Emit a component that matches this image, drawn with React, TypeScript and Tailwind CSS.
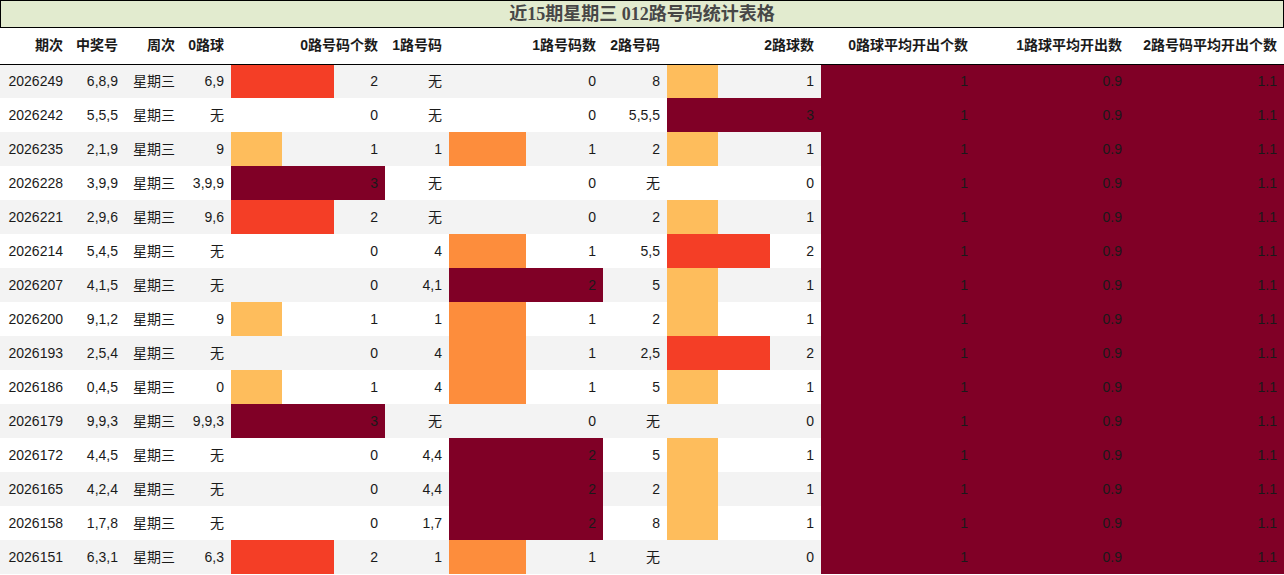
import React from "react";

type Row = [string, string, string, string, number, string, number, string, number];

const rows: Row[] = [
  ["2026249", "6,8,9", "星期三", "6,9", 2, "无", 0, "8", 1],
  ["2026242", "5,5,5", "星期三", "无", 0, "无", 0, "5,5,5", 3],
  ["2026235", "2,1,9", "星期三", "9", 1, "1", 1, "2", 1],
  ["2026228", "3,9,9", "星期三", "3,9,9", 3, "无", 0, "无", 0],
  ["2026221", "2,9,6", "星期三", "9,6", 2, "无", 0, "2", 1],
  ["2026214", "5,4,5", "星期三", "无", 0, "4", 1, "5,5", 2],
  ["2026207", "4,1,5", "星期三", "无", 0, "4,1", 2, "5", 1],
  ["2026200", "9,1,2", "星期三", "9", 1, "1", 1, "2", 1],
  ["2026193", "2,5,4", "星期三", "无", 0, "4", 1, "2,5", 2],
  ["2026186", "0,4,5", "星期三", "0", 1, "4", 1, "5", 1],
  ["2026179", "9,9,3", "星期三", "9,9,3", 3, "无", 0, "无", 0],
  ["2026172", "4,4,5", "星期三", "无", 0, "4,4", 2, "5", 1],
  ["2026165", "4,2,4", "星期三", "无", 0, "4,4", 2, "2", 1],
  ["2026158", "1,7,8", "星期三", "无", 0, "1,7", 2, "8", 1],
  ["2026151", "6,3,1", "星期三", "6,3", 2, "1", 1, "无", 0],
];

const widths = [70, 55, 57, 49, 154, 64, 154, 64, 154, 154, 154, 155];
const headers = [
  "期次",
  "中奖号",
  "周次",
  "0路球",
  "0路号码个数",
  "1路号码",
  "1路号码数",
  "2路号码",
  "2路球数",
  "0路球平均开出个数",
  "1路球平均开出数",
  "2路号码平均开出个数",
];

function color3(v: number) {
  if (v === 1) return "#febd5c";
  if (v === 2) return "#f43e26";
  return "#800026";
}
function color2(v: number) {
  if (v === 1) return "#fd8d3c";
  return "#800026";
}

function BarCell({ v, max, color }: { v: number; max: number; color: string }) {
  const pct = (v / max) * 100;
  const style =
    v > 0
      ? { background: `linear-gradient(to right, ${color} 0%, ${color} ${pct}%, transparent ${pct}%)` }
      : undefined;
  return (
    <td className="pr-[7px] text-right" style={style}>
      {v}
    </td>
  );
}

export default function App() {
  return (
    <div
      className="w-[1284px] h-[575px] overflow-hidden bg-white text-[#1a1a1a]"
      style={{ fontFamily: '"Liberation Sans", Arial, "Noto Sans CJK SC", sans-serif' }}
    >
      <div
        className="h-[28px] border border-black bg-[#e2ebcf] flex items-center justify-center text-[18px] font-bold text-[#474747]"
        style={{ fontFamily: '"Liberation Serif", "Noto Sans CJK SC", serif' }}
      >
        近15期星期三 012路号码统计表格
      </div>
      <table className="table-fixed border-collapse w-[1284px] text-[14px]">
        <colgroup>
          {widths.map((w, i) => (
            <col key={i} style={{ width: w }} />
          ))}
        </colgroup>
        <thead>
          <tr className="h-[36px] border-b border-black bg-white">
            {headers.map((h) => (
              <th key={h} className="pr-[7px] text-right font-bold whitespace-nowrap">
                {h}
              </th>
            ))}
          </tr>
        </thead>
        <tbody>
          {rows.map((r, i) => (
            <tr key={r[0]} className={`h-[34px] ${i % 2 === 0 ? "bg-[#f3f3f3]" : "bg-white"}`}>
              <td className="pr-[7px] text-right">{r[0]}</td>
              <td className="pr-[7px] text-right">{r[1]}</td>
              <td className="pr-[7px] text-right">{r[2]}</td>
              <td className="pr-[7px] text-right">{r[3]}</td>
              <BarCell v={r[4]} max={3} color={color3(r[4])} />
              <td className="pr-[7px] text-right">{r[5]}</td>
              <BarCell v={r[6]} max={2} color={color2(r[6])} />
              <td className="pr-[7px] text-right">{r[7]}</td>
              <BarCell v={r[8]} max={3} color={color3(r[8])} />
              <td className="pr-[7px] text-right bg-[#800026]">1</td>
              <td className="pr-[7px] text-right bg-[#800026]">0.9</td>
              <td className="pr-[7px] text-right bg-[#800026]">1.1</td>
            </tr>
          ))}
        </tbody>
      </table>
    </div>
  );
}
